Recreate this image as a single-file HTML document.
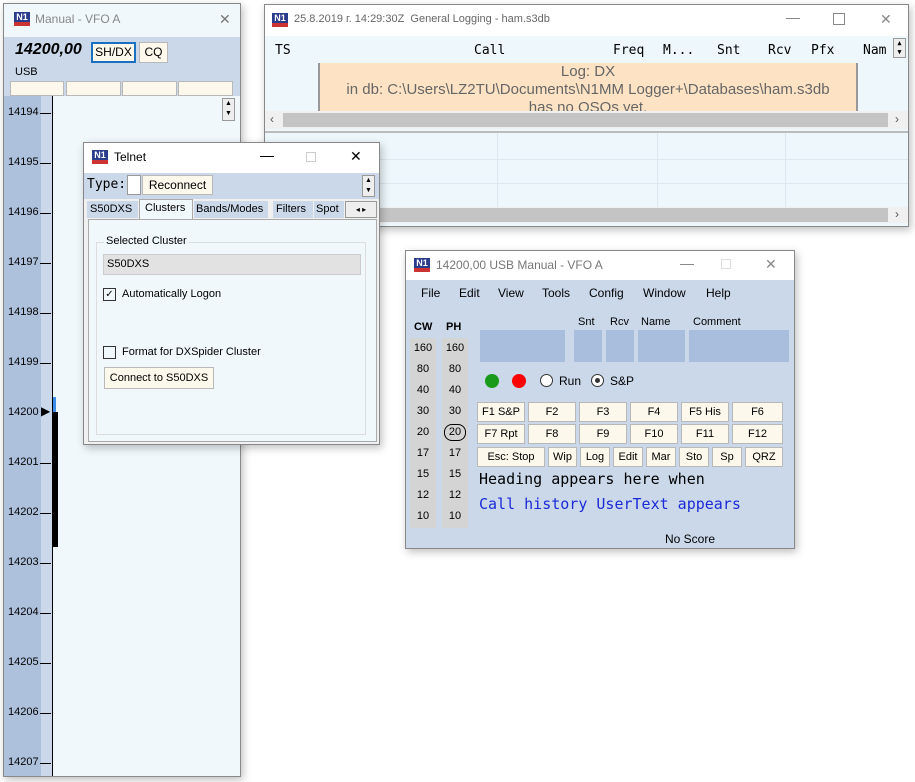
<!DOCTYPE html><html><head><style>
*{box-sizing:border-box;margin:0;padding:0}
body{width:915px;height:782px;background:#fff;position:relative;overflow:hidden;font-family:"Liberation Sans",sans-serif;font-size:12px;color:#000}
.a{position:absolute}
.win{position:absolute;border:1px solid #888;box-shadow:2px 3px 8px rgba(0,0,0,.25);background:#fff}
.logo{position:absolute;width:16px;height:14px;background:#2a3c8c;color:#fff;font:bold 9px "Liberation Sans";text-align:center;line-height:10px;border-bottom:4px solid #c33}
.btn{position:absolute;background:#fdf8ec;border:1px solid #b8b8b8;text-align:center;font-size:12px}
.mono{font-family:"DejaVu Sans Mono","Liberation Mono",monospace}
.fl{position:absolute;left:8px;font-size:11px}
.tk{position:absolute;left:40px;width:11px;height:1px;background:#000}
.x{font-size:14px;font-weight:normal}
</style></head><body>

<!-- VFO window -->
<div class="win" style="left:3px;top:3px;width:238px;height:774px;background:#f0f8fc">
 <div class="logo" style="left:10px;top:8px">N1</div>
 <div class="a" style="left:31px;top:8px;font-size:12px;color:#888">Manual - VFO A</div>
 <div class="a x" style="left:215px;top:7px;color:#777">✕</div>
 <div class="a" style="left:0;top:33px;width:236px;height:59px;background:#cbd8ea">
  <div class="a" style="left:11px;top:4px;font:italic bold 16px 'Liberation Sans'">14200,00</div>
  <div class="btn" style="left:87px;top:5px;width:45px;height:21px;border:2px solid #1a6fc0;line-height:17px;background:#fdf8ec">SH/DX</div>
  <div class="btn" style="left:135px;top:5px;width:29px;height:21px;line-height:19px">CQ</div>
  <div class="a" style="left:11px;top:29px;font-size:11px">USB</div>
  <div class="btn" style="left:6px;top:44px;width:54px;height:15px"></div>
  <div class="btn" style="left:62px;top:44px;width:55px;height:15px"></div>
  <div class="btn" style="left:118px;top:44px;width:55px;height:15px"></div>
  <div class="btn" style="left:174px;top:44px;width:55px;height:15px"></div>
 </div>
 <div class="a" style="left:0;top:92px;width:37px;height:680px;background:#aec1dc"></div>
 <div class="a" style="left:37px;top:92px;width:11px;height:680px;background:#cbd8ea"></div>
 <div class="a" style="left:48px;top:92px;width:1px;height:680px;background:#000"></div>
 <div class="a" style="left:218px;top:94px;width:13px;height:23px;border:1px solid #999;background:#eee;font-size:7px;line-height:10px;text-align:center">▲<br>▼</div>
 <div class="a" style="left:49px;top:393px;width:3px;height:15px;background:#3a8ee8"></div>
 <div class="a" style="left:49px;top:408px;width:5px;height:135px;background:#000"></div>
 <div class="a" style="left:37px;top:400px;font-size:12px">▶</div>
</div>
<div class="a" style="left:0;top:0">
 <div class="fl" style="top:106px">14194</div><div class="tk" style="top:113px"></div>
 <div class="fl" style="top:156px">14195</div><div class="tk" style="top:163px"></div>
 <div class="fl" style="top:206px">14196</div><div class="tk" style="top:213px"></div>
 <div class="fl" style="top:256px">14197</div><div class="tk" style="top:263px"></div>
 <div class="fl" style="top:306px">14198</div><div class="tk" style="top:313px"></div>
 <div class="fl" style="top:356px">14199</div><div class="tk" style="top:363px"></div>
 <div class="fl" style="top:406px">14200</div>
 <div class="fl" style="top:456px">14201</div><div class="tk" style="top:463px"></div>
 <div class="fl" style="top:506px">14202</div><div class="tk" style="top:513px"></div>
 <div class="fl" style="top:556px">14203</div><div class="tk" style="top:563px"></div>
 <div class="fl" style="top:606px">14204</div><div class="tk" style="top:613px"></div>
 <div class="fl" style="top:656px">14205</div><div class="tk" style="top:663px"></div>
 <div class="fl" style="top:706px">14206</div><div class="tk" style="top:713px"></div>
 <div class="fl" style="top:756px">14207</div><div class="tk" style="top:763px"></div>
</div>

<!-- Log window -->
<div class="win" style="left:264px;top:4px;width:645px;height:223px;background:#eef8fc">
 <div class="a" style="left:0;top:0;width:643px;height:31px;background:#fff"></div>
 <div class="logo" style="left:7px;top:8px">N1</div>
 <div class="a" style="left:29px;top:8px;font-size:11px;color:#666">25.8.2019 г. 14:29:30Z &nbsp;General Logging - ham.s3db</div>
 <div class="a" style="left:521px;top:13px;width:14px;height:1px;background:#888"></div>
 <div class="a" style="left:568px;top:8px;width:12px;height:12px;border:1px solid #888"></div>
 <div class="a x" style="left:615px;top:6px;color:#888">✕</div>
 <div class="a mono" style="left:0;top:33px;width:643px;height:24px;font-size:13px">
  <span class="a" style="left:10px;top:5px">TS</span><span class="a" style="left:209px;top:5px">Call</span>
  <span class="a" style="left:348px;top:5px">Freq</span><span class="a" style="left:398px;top:5px">M...</span>
  <span class="a" style="left:452px;top:5px">Snt</span><span class="a" style="left:503px;top:5px">Rcv</span>
  <span class="a" style="left:546px;top:5px">Pfx</span><span class="a" style="left:598px;top:5px">Nam</span>
  <div class="a" style="left:628px;top:0;width:13px;height:20px;border:1px solid #999;background:#eee;font-size:7px;line-height:9px;text-align:center">▲<br>▼</div>
 </div>
 <div class="a" style="left:53px;top:58px;width:540px;height:48px;background:#fde3c4;border-left:2px solid #999;border-right:2px solid #999;text-align:center;font-size:15px;color:#666;line-height:18px;overflow:hidden">Log: DX<br>in db: C:\Users\LZ2TU\Documents\N1MM Logger+\Databases\ham.s3db<br>has no QSOs yet.</div>
 <div class="a" style="left:0;top:106px;width:643px;height:18px;background:#f0f0f0"><div class="a" style="left:18px;top:2px;width:605px;height:14px;background:#c4c4c4"></div><span class="a" style="left:5px;top:1px;color:#555">‹</span><span class="a" style="left:630px;top:1px;color:#555">›</span></div>
 <div class="a" style="left:0;top:126px;width:643px;height:2px;background:#bbb"></div>
 <div class="a" style="left:0;top:154px;width:643px;height:1px;background:#dde8ee"></div>
 <div class="a" style="left:0;top:178px;width:643px;height:1px;background:#dde8ee"></div>
 <div class="a" style="left:232px;top:128px;width:1px;height:74px;background:#dde8ee"></div>
 <div class="a" style="left:392px;top:128px;width:1px;height:74px;background:#dde8ee"></div>
 <div class="a" style="left:520px;top:128px;width:1px;height:74px;background:#dde8ee"></div>
 <div class="a" style="left:0;top:202px;width:643px;height:16px;background:#f0f0f0"><div class="a" style="left:18px;top:1px;width:605px;height:14px;background:#c4c4c4"></div><span class="a" style="left:630px;top:0px;color:#555">›</span></div>
</div>

<!-- Telnet -->
<div class="win" style="left:83px;top:142px;width:297px;height:303px;background:#f0f0f0">
 <div class="a" style="left:0;top:0;width:295px;height:30px;background:#fff"></div>
 <div class="logo" style="left:8px;top:7px">N1</div>
 <div class="a" style="left:30px;top:7px;font-size:12px">Telnet</div>
 <div class="a" style="left:176px;top:13px;width:14px;height:1px;background:#000"></div>
 <div class="a" style="left:222px;top:9px;width:10px;height:10px;border:1px solid #ccc"></div>
 <div class="a x" style="left:266px;top:5px">✕</div>
 <div class="a" style="left:0;top:30px;width:295px;height:26px;background:#cbd8ea">
  <span class="a mono" style="left:3px;top:4px;font-size:13px">Type:</span>
  <div class="a" style="left:43px;top:2px;width:14px;height:20px;background:#fff;border:1px solid #999"></div>
  <div class="btn" style="left:58px;top:2px;width:71px;height:20px;line-height:18px">Reconnect</div>
  <div class="a" style="left:278px;top:2px;width:13px;height:22px;border:1px solid #999;background:#eee;font-size:7px;line-height:10px;text-align:center">▲<br>▼</div>
 </div>
 <div class="a" style="left:3px;top:58px;font-size:11px">
  <div class="a" style="left:0;top:0;width:51px;height:17px;background:#cbd8ea;padding:2px 3px">S50DXS</div>
  <div class="a" style="left:52px;top:-2px;width:54px;height:20px;background:#f0f8fc;padding:2px 5px;border:1px solid #aaa;border-bottom:none">Clusters</div>
  <div class="a" style="left:107px;top:0;width:74px;height:17px;background:#cbd8ea;padding:2px 2px">Bands/Modes</div>
  <div class="a" style="left:186px;top:0;width:40px;height:17px;background:#cbd8ea;padding:2px 3px">Filters</div>
  <div class="a" style="left:227px;top:0;width:30px;height:17px;background:#cbd8ea;padding:2px 2px">Spot</div>
  <div class="a" style="left:258px;top:0;width:32px;height:17px;background:#eee;border:1px solid #999;font-size:8px;line-height:15px;text-align:center">◂ ▸</div>
 </div>
 <div class="a" style="left:4px;top:76px;width:289px;height:223px;background:#f0f8fc;border:1px solid #aaa">
  <div class="a" style="left:7px;top:22px;width:270px;height:193px;border:1px solid #ddd"></div>
  <div class="a" style="left:15px;top:15px;background:#f0f8fc;padding:0 2px;font-size:11px">Selected Cluster</div>
  <div class="a" style="left:14px;top:34px;width:258px;height:21px;background:#e2e2e2;border:1px solid #ccc;font-size:11px;padding:3px 3px">S50DXS</div>
  <div class="a" style="left:14px;top:68px;width:13px;height:13px;border:1px solid #333;font-size:10px;line-height:11px;text-align:center">✓</div>
  <div class="a" style="left:33px;top:68px;font-size:11px">Automatically Logon</div>
  <div class="a" style="left:14px;top:126px;width:13px;height:13px;border:1px solid #333"></div>
  <div class="a" style="left:33px;top:126px;font-size:11px">Format for DXSpider Cluster</div>
  <div class="btn" style="left:15px;top:147px;width:110px;height:22px;line-height:20px;font-size:11px">Connect to S50DXS</div>
 </div>
</div>

<!-- Entry window -->
<div class="win" style="left:405px;top:250px;width:390px;height:299px;background:#cbd8ea">
 <div class="a" style="left:0;top:0;width:388px;height:29px;background:#fff"></div>
 <div class="logo" style="left:8px;top:7px">N1</div>
 <div class="a" style="left:30px;top:7px;font-size:12px;color:#777">14200,00 USB Manual - VFO A</div>
 <div class="a" style="left:274px;top:13px;width:14px;height:1px;background:#888"></div>
 <div class="a" style="left:315px;top:8px;width:10px;height:10px;border:1px solid #ddd"></div>
 <div class="a x" style="left:359px;top:5px;color:#888">✕</div>
 <div class="a" style="left:15px;top:35px">File</div>
 <div class="a" style="left:53px;top:35px">Edit</div><div class="a" style="left:92px;top:35px">View</div>
 <div class="a" style="left:136px;top:35px">Tools</div><div class="a" style="left:183px;top:35px">Config</div>
 <div class="a" style="left:237px;top:35px">Window</div><div class="a" style="left:300px;top:35px">Help</div>
 <div class="a" style="left:8px;top:70px;font-weight:bold;font-size:11px">CW</div>
 <div class="a" style="left:40px;top:70px;font-weight:bold;font-size:11px">PH</div>
 <div class="a" style="left:4px;top:87px;width:26px;height:190px;background:#d4d4d4"></div>
 <div class="a" style="left:36px;top:87px;width:26px;height:190px;background:#d4d4d4"></div>
 <div class="a" style="left:4px;top:87px;width:26px;text-align:center;font-size:11px;line-height:21px">160<br>80<br>40<br>30<br>20<br>17<br>15<br>12<br>10</div>
 <div class="a" style="left:36px;top:87px;width:26px;text-align:center;font-size:11px;line-height:21px">160<br>80<br>40<br>30<br>20<br>17<br>15<br>12<br>10</div>
 <div class="a" style="left:38px;top:173px;width:22px;height:17px;border:1px solid #000;border-radius:8px"></div>
 <div class="a" style="left:172px;top:65px;font-size:11px">Snt</div><div class="a" style="left:204px;top:65px;font-size:11px">Rcv</div>
 <div class="a" style="left:235px;top:65px;font-size:11px">Name</div><div class="a" style="left:287px;top:65px;font-size:11px">Comment</div>
 <div class="a" style="left:74px;top:79px;width:85px;height:32px;background:#a9bedc"></div>
 <div class="a" style="left:168px;top:79px;width:28px;height:32px;background:#a9bedc"></div>
 <div class="a" style="left:200px;top:79px;width:28px;height:32px;background:#a9bedc"></div>
 <div class="a" style="left:232px;top:79px;width:47px;height:32px;background:#a9bedc"></div>
 <div class="a" style="left:283px;top:79px;width:100px;height:32px;background:#a9bedc"></div>
 <div class="a" style="left:79px;top:123px;width:14px;height:14px;border-radius:50%;background:#1a9a1a"></div>
 <div class="a" style="left:106px;top:123px;width:14px;height:14px;border-radius:50%;background:#f00"></div>
 <div class="a" style="left:134px;top:123px;width:13px;height:13px;border-radius:50%;background:#fff;border:1px solid #333"></div>
 <div class="a" style="left:153px;top:123px">Run</div>
 <div class="a" style="left:185px;top:123px;width:13px;height:13px;border-radius:50%;background:#fff;border:1px solid #333"><div class="a" style="left:3px;top:3px;width:5px;height:5px;border-radius:50%;background:#333"></div></div>
 <div class="a" style="left:204px;top:123px">S&amp;P</div>
 <div class="btn" style="left:71px;top:151px;width:48px;height:20px;line-height:18px;font-size:11px">F1 S&amp;P</div>
 <div class="btn" style="left:122px;top:151px;width:48px;height:20px;line-height:18px;font-size:11px">F2</div>
 <div class="btn" style="left:173px;top:151px;width:48px;height:20px;line-height:18px;font-size:11px">F3</div>
 <div class="btn" style="left:224px;top:151px;width:48px;height:20px;line-height:18px;font-size:11px">F4</div>
 <div class="btn" style="left:275px;top:151px;width:48px;height:20px;line-height:18px;font-size:11px">F5 His</div>
 <div class="btn" style="left:326px;top:151px;width:51px;height:20px;line-height:18px;font-size:11px">F6</div>
 <div class="btn" style="left:71px;top:173px;width:48px;height:20px;line-height:18px;font-size:11px">F7 Rpt</div>
 <div class="btn" style="left:122px;top:173px;width:48px;height:20px;line-height:18px;font-size:11px">F8</div>
 <div class="btn" style="left:173px;top:173px;width:48px;height:20px;line-height:18px;font-size:11px">F9</div>
 <div class="btn" style="left:224px;top:173px;width:48px;height:20px;line-height:18px;font-size:11px">F10</div>
 <div class="btn" style="left:275px;top:173px;width:48px;height:20px;line-height:18px;font-size:11px">F11</div>
 <div class="btn" style="left:326px;top:173px;width:51px;height:20px;line-height:18px;font-size:11px">F12</div>
 <div class="btn" style="left:71px;top:196px;width:68px;height:20px;line-height:18px;font-size:11px">Esc: Stop</div>
 <div class="btn" style="left:142px;top:196px;width:29px;height:20px;line-height:18px;font-size:11px">Wip</div>
 <div class="btn" style="left:174px;top:196px;width:30px;height:20px;line-height:18px;font-size:11px">Log</div>
 <div class="btn" style="left:207px;top:196px;width:30px;height:20px;line-height:18px;font-size:11px">Edit</div>
 <div class="btn" style="left:240px;top:196px;width:30px;height:20px;line-height:18px;font-size:11px">Mar</div>
 <div class="btn" style="left:273px;top:196px;width:30px;height:20px;line-height:18px;font-size:11px">Sto</div>
 <div class="btn" style="left:306px;top:196px;width:30px;height:20px;line-height:18px;font-size:11px">Sp</div>
 <div class="btn" style="left:339px;top:196px;width:38px;height:20px;line-height:18px;font-size:11px">QRZ</div>
 <div class="a mono" style="left:73px;top:219px;font-size:15px">Heading appears here when</div>
 <div class="a mono" style="left:73px;top:244px;font-size:15px;color:#1a2ad8">Call history UserText appears</div>
 <div class="a" style="left:259px;top:281px;font-size:12px">No Score</div>
</div>
</body></html>
